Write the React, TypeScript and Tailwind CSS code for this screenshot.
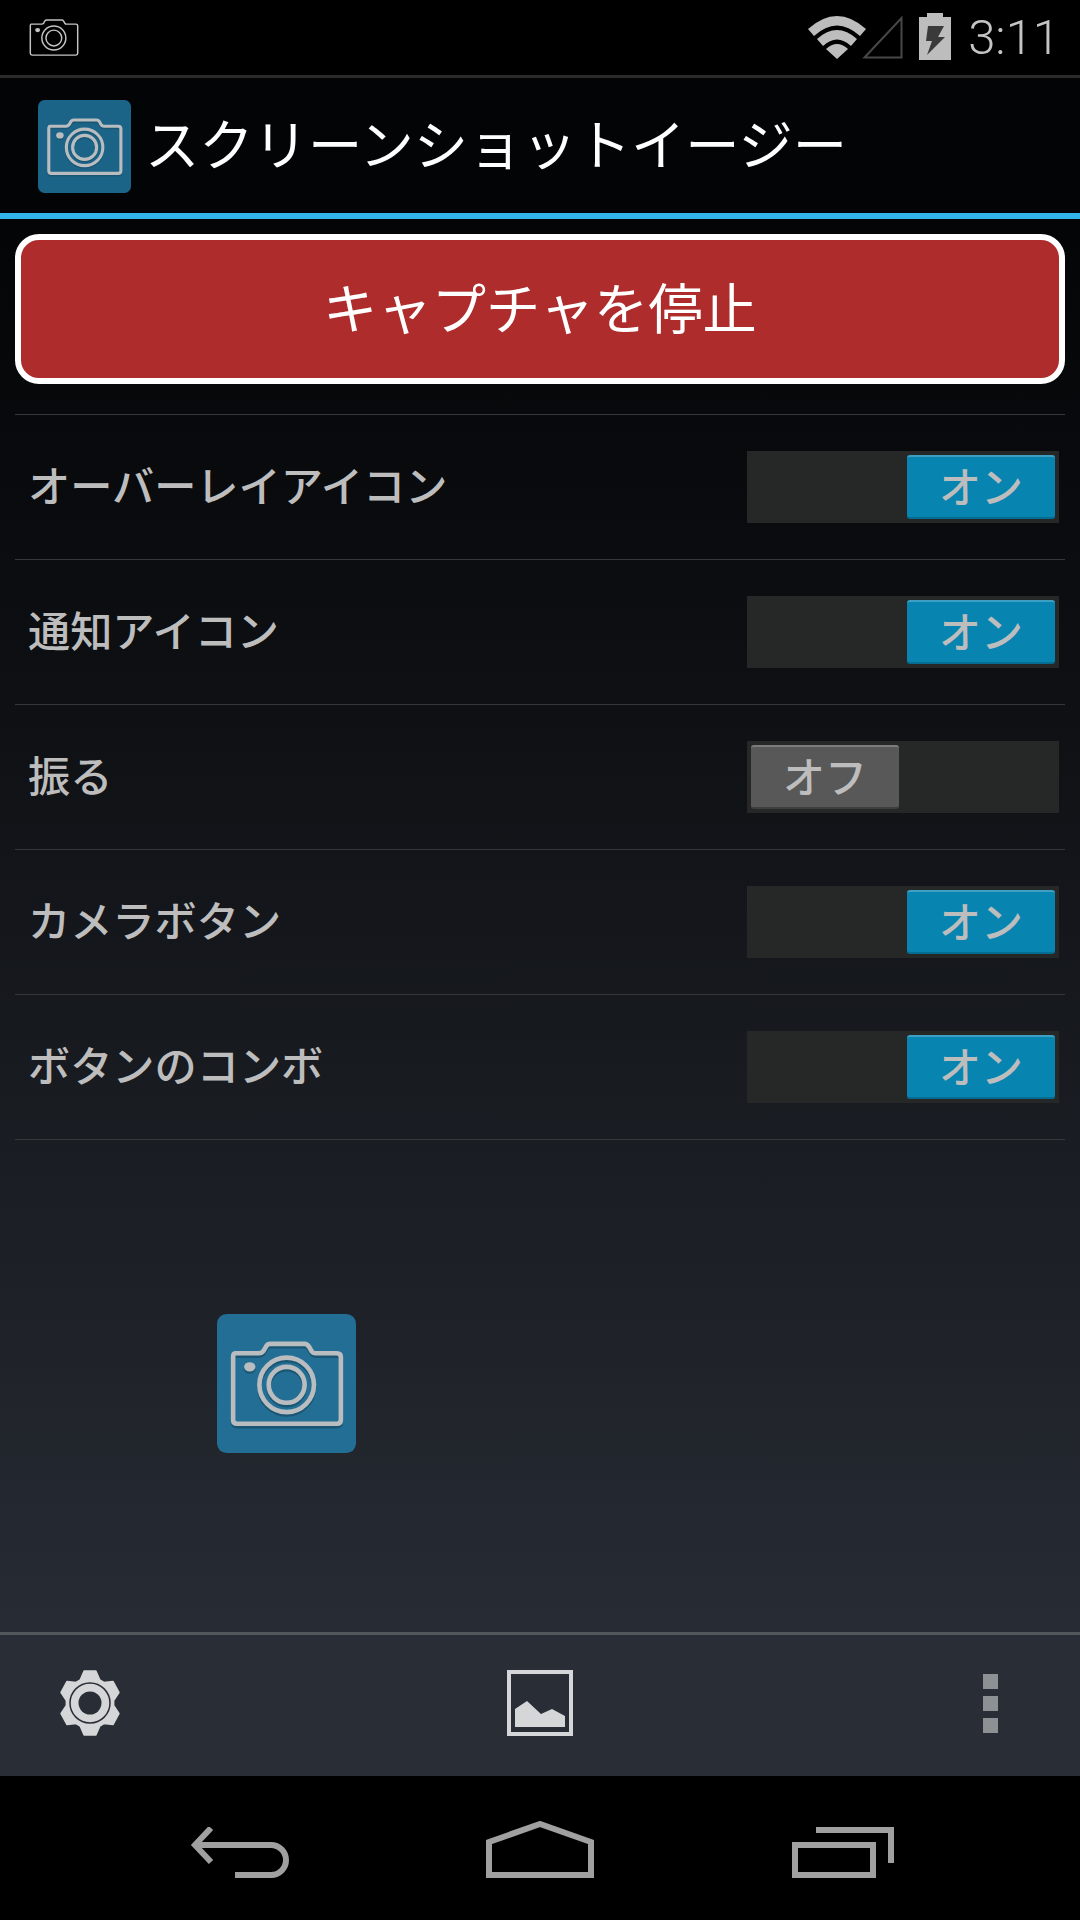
const jp = "font-['Noto_Sans_CJK_JP','Noto_Sans',sans-serif]";

const settings = [
  { label: 'オーバーレイアイコン', on: true },
  { label: '通知アイコン', on: true },
  { label: '振る', on: false },
  { label: 'カメラボタン', on: true },
  { label: 'ボタンのコンボ', on: true }
];

const gearPoints = Array.from({ length: 6 })
  .flatMap((_, i) => {
    const a = -90 + i * 60;
    return [
      [a - 24, 0.76],
      [a - 11, 0.98],
      [a + 11, 0.98],
      [a + 24, 0.76]
    ];
  })
  .map(([deg, r]) => {
    const rad = (deg * Math.PI) / 180;
    return `${(31 + 31 * r * Math.cos(rad)).toFixed(1)},${(33 + 33 * r * Math.sin(rad)).toFixed(1)}`;
  })
  .join(' ');

const CAMERA_BODY =
  'M106 160 H178 Q186 160 192 152 L200 138 Q204 132 212 132 H316 Q322 132 328 140 L336 154 Q340 160 348 160 H412 Q424 160 424 172 V360 Q424 372 412 372 H112 Q100 372 100 360 V172 Q100 160 106 160 Z';

function CameraLines({ color, width }: { color: string; width: number }) {
  return (
    <g fill="none" stroke={color} strokeWidth={width}>
      <path d={CAMERA_BODY} />
      <circle cx="261" cy="255" r="82" />
      <circle cx="261" cy="255" r="54" />
      <ellipse cx="150" cy="201" rx="17" ry="14" fill={color} stroke="none" />
    </g>
  );
}

function AppIcon({ className, bg }: { className: string; bg: string }) {
  return (
    <div className={`${className} ${bg} shrink-0 rounded-[7%]`}>
      <svg viewBox="52 42 417 418" className="h-full w-full">
        <g transform="translate(0 7)">
          <CameraLines color="#1a5673" width={14} />
        </g>
        <CameraLines color="#b9bdc0" width={14} />
      </svg>
    </div>
  );
}

function StatusBar() {
  return (
    <div className="flex h-[78px] shrink-0 items-center justify-between border-b-[3px] border-[#2a2a2a] bg-black pl-[29px] pr-[20px]">
      <svg viewBox="94 125 336 253" className="h-[37px] w-[50px]">
        <CameraLines color="#c4c4c4" width={10} />
      </svg>
      <div className="flex items-center">
        <svg viewBox="0 0 58 43" className="h-[43px] w-[58px]">
          <path d="M0 13 Q29 -13 58 13 L52 20 Q29 -1 6 20 Z" fill="#bdbdbd" />
          <path d="M9 23 Q29 5 49 23 L43 30 Q29 17 15 30 Z" fill="#bdbdbd" />
          <path d="M18 33 Q29 23 40 33 L29 43 Z" fill="#bdbdbd" />
        </svg>
        <svg viewBox="0 0 42 45" className="-ml-[5px] -mt-[3px] h-[45px] w-[42px]">
          <path d="M3.5 43.5 L40.5 4 V43.5 Z" fill="none" stroke="#484848" strokeWidth="2" />
        </svg>
        <svg viewBox="0 0 32 47" className="ml-[16px] -mt-[2px] h-[47px] w-[32px]">
          <path d="M8 0 H24 V4 H32 V47 H0 V4 H8 Z" fill="#bdbdbd" />
          <path d="M9 13 H25 L19 24 H26 L8 42 L13 28 H7 Z" fill="#3a3a3a" />
        </svg>
        <span className="ml-[17px] font-['Roboto',sans-serif] text-[49px] font-light leading-none text-[#c4c4c4]">
          3:11
        </span>
      </div>
    </div>
  );
}

function ActionBar() {
  return (
    <div className="flex h-[141px] shrink-0 items-center border-b-[6px] border-[#33b5e5] bg-[#030405] pl-[38px]">
      <AppIcon className="mt-[2px] h-[93px] w-[93px]" bg="bg-[#1b6488]" />
      <h1 className={`${jp} ml-[14px] -mt-[7px] text-[54.3px] font-normal leading-none text-white`}>
        スクリーンショットイージー
      </h1>
    </div>
  );
}

function Toggle({ on }: { on: boolean }) {
  return (
    <div className={`flex h-[72px] w-[312px] items-center bg-[#262727] px-[4px] ${on ? 'justify-end' : 'justify-start'}`}>
      <div
        className={`${jp} flex h-[64px] w-[148px] items-center justify-center rounded-[3px] border-t-[2px] border-b-[2px] pb-[4px] text-[42px] font-medium leading-none text-[#bdbdbd] ${
          on ? 'border-t-[#3c9fc3] border-b-[#066d92] bg-[#0784b0]' : 'border-t-[#7c7c7c] border-b-[#3e3e3e] bg-[#585858]'
        }`}
      >
        {on ? 'オン' : 'オフ'}
      </div>
    </div>
  );
}

function BottomBar() {
  return (
    <div className="grid h-[144px] shrink-0 grid-cols-3 items-center border-t-[3px] border-[#53565b] bg-[#292d35] pb-[5px]">
      <svg viewBox="0 0 62 66" className="ml-[59px] h-[66px] w-[62px]">
        <polygon points={gearPoints} fill="#d4d6d8" stroke="#d4d6d8" strokeWidth="2" strokeLinejoin="round" />
        <circle cx="31" cy="33" r="20" fill="none" stroke="#292d35" strokeWidth="1.5" />
        <circle cx="31" cy="33" r="11.5" fill="#292d35" />
      </svg>
      <svg viewBox="0 0 66 66" className="h-[66px] w-[66px] justify-self-center">
        <rect x="2" y="2" width="62" height="62" fill="none" stroke="#d4d6d8" strokeWidth="4" />
        <path d="M8 39 L20 31 L34 44 L45 39 L58 46 V57 H8 Z" fill="#d4d6d8" />
      </svg>
      <div className="mr-[82px] flex flex-col gap-[7px] justify-self-end">
        <div className="h-[15px] w-[15px] bg-[#8e9194]" />
        <div className="h-[15px] w-[15px] bg-[#8e9194]" />
        <div className="h-[15px] w-[15px] bg-[#8e9194]" />
      </div>
    </div>
  );
}

function NavBar() {
  return (
    <div className="flex h-[144px] shrink-0 items-end bg-black pb-[42px] pl-[190px]">
      <svg viewBox="0 0 99 51" className="h-[51px] w-[99px]">
        <path d="M21 1 L5 18 L21 35 M5 18 H81 A15 15 0 0 1 81 48 H45" fill="none" stroke="#a0a0a0" strokeWidth="6" />
      </svg>
      <svg viewBox="0 0 108 57" className="ml-[197px] h-[57px] w-[108px]">
        <path d="M3 21 L54 3 L105 21 V54 H3 Z" fill="none" stroke="#a0a0a0" strokeWidth="6" />
      </svg>
      <svg viewBox="0 0 102 51" className="ml-[198px] h-[51px] w-[102px]">
        <rect x="3" y="18" width="78" height="30" fill="none" stroke="#a0a0a0" strokeWidth="6" />
        <path d="M24 3 H99 V36" fill="none" stroke="#a0a0a0" strokeWidth="6" />
      </svg>
    </div>
  );
}

export default function App() {
  return (
    <div className="flex h-[1920px] w-[1080px] flex-col overflow-hidden bg-black">
      <StatusBar />
      <ActionBar />
      <main className="relative flex-1 bg-gradient-to-b from-[#040506] to-[#272b33] px-[15px] pt-[15px]">
        <button
          type="button"
          className={`${jp} flex h-[150px] w-full items-center justify-center rounded-[24px] border-[6px] border-white bg-[#ae2c2c] pb-[5px] text-[54.3px] font-normal leading-none text-white`}
        >
          キャプチャを停止
        </button>
        <div className="mt-[30px] border-t border-[#35373a]">
          {settings.map(({ label, on }) => (
            <div key={label} className="flex h-[145px] items-center justify-between border-b border-[#35373a] pl-[13px] pr-[6px]">
              <span className={`${jp} -mt-[5px] text-[42.2px] font-medium leading-none text-[#bdbdbd]`}>{label}</span>
              <Toggle on={on} />
            </div>
          ))}
        </div>
        <AppIcon className="absolute left-[217px] top-[1095px] h-[139px] w-[139px]" bg="bg-[#236e94]" />
      </main>
      <BottomBar />
      <NavBar />
    </div>
  );
}
